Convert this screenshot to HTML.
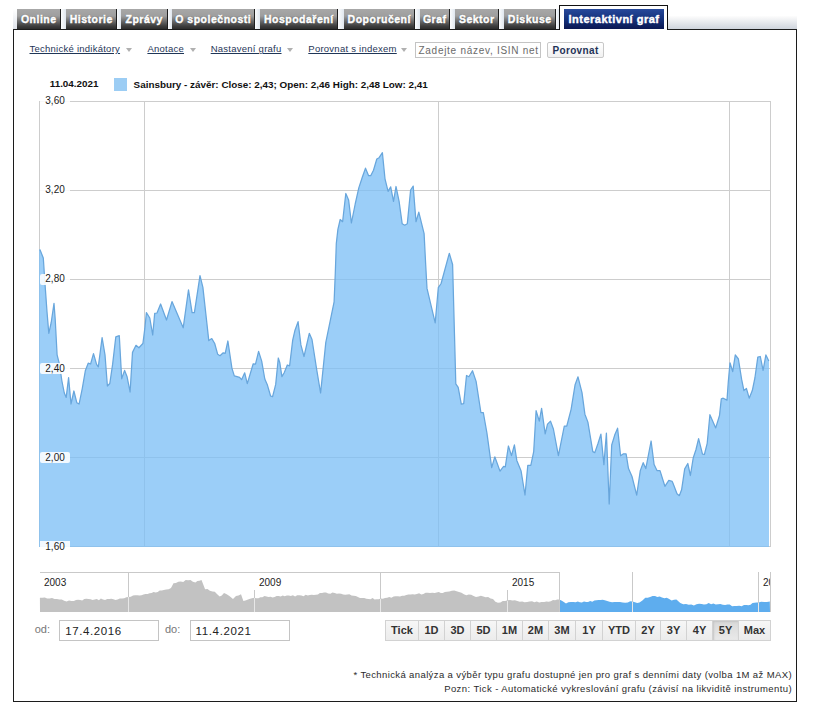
<!DOCTYPE html>
<html><head><meta charset="utf-8"><style>
*{margin:0;padding:0;box-sizing:border-box}
html,body{width:823px;height:711px;background:#fff;overflow:hidden;font-family:"Liberation Sans",sans-serif;}
.t{position:absolute;white-space:nowrap}
.tabbar{position:absolute;left:13px;top:16px;width:784px;height:13px;background:linear-gradient(#fdfdfd,#cfd4dc)}
.tab{position:absolute;top:9px;height:20px;background:linear-gradient(#a8a8a8 0%,#9e9e9e 35%,#6c6c6c 60%,#3e3e3e 85%,#2c2c2c 100%);border-right:1px solid #1e1e1e;color:#fff;font-weight:bold;font-size:10.5px;line-height:21px;text-align:center;letter-spacing:0.5px;text-indent:0.5px;text-shadow:0 0 1px #222;-webkit-text-stroke:0.45px #fff}
.gap{position:absolute;top:9px;height:20px;background:linear-gradient(90deg,#fbfcfd,#dfe6ee)}
.act{position:absolute;left:559px;top:5px;width:109px;height:25px;border:1px solid #111;border-bottom:none;background:#fff}
.actin{position:absolute;left:564px;top:9px;width:100px;height:20px;background:linear-gradient(#27499b 0%,#15327c 50%,#0a1752 100%);color:#fff;font-weight:bold;font-size:11px;line-height:21px;text-align:center;letter-spacing:0.5px;text-indent:0px;-webkit-text-stroke:0.4px #fff}
.box{position:absolute;left:13px;top:29px;width:784px;height:673px;border:1px solid #1c1c1c}
.lnk{color:#1f3657;text-decoration:underline;font-size:10px}
.arr{position:absolute;width:0;height:0;border-left:3px solid transparent;border-right:3px solid transparent;border-top:4px solid #b0b0b0}
.inp{position:absolute;border:1px solid #c4c4c4;background:#fff}
.btn{position:absolute;left:547px;top:42px;width:57px;height:16px;border:1px solid #c8c8c8;border-radius:2px;background:linear-gradient(#fff,#f1f1f1);color:#1f3358;font-weight:bold;font-size:10px;line-height:15px;letter-spacing:0.35px;text-align:center}
.rb{position:absolute;top:620px;height:21px;border:1px solid #d2d2d2;border-right:none;background:linear-gradient(#f6f6f6,#ececec);color:#333;font-weight:bold;font-size:11px;line-height:19px;text-align:center}
</style></head><body>
<div class="tabbar"></div>
<div class="gap" style="left:13px;width:4px;background:linear-gradient(#fff,#dfe3ea)"></div>
<div class="tab" style="left:17px;width:44px">Online</div><div class="gap" style="left:61px;width:5px"></div><div class="tab" style="left:66px;width:51px">Historie</div><div class="gap" style="left:117px;width:4px"></div><div class="tab" style="left:121px;width:47px">Zprávy</div><div class="gap" style="left:168px;width:4px"></div><div class="tab" style="left:172px;width:83px">O společnosti</div><div class="gap" style="left:255px;width:5px"></div><div class="tab" style="left:260px;width:78px">Hospodaření</div><div class="gap" style="left:338px;width:6px"></div><div class="tab" style="left:344px;width:71px">Doporučení</div><div class="gap" style="left:415px;width:5px"></div><div class="tab" style="left:420px;width:30px">Graf</div><div class="gap" style="left:450px;width:5px"></div><div class="tab" style="left:455px;width:44px">Sektor</div><div class="gap" style="left:499px;width:5px"></div><div class="tab" style="left:504px;width:52px">Diskuse</div><div class="gap" style="left:556px;width:3px"></div>
<div class="box"></div>
<div class="act"></div>
<div style="position:absolute;left:560px;top:29px;width:107px;height:2px;background:#fff"></div>
<div class="actin">Interaktivní graf</div>

<div class="t" style="left:29.5px;top:44.36px;font-size:9.5px;line-height:9.5px;color:#1f3657;text-decoration:underline;letter-spacing:0.25px">Technické indikátory</div>
<div class="arr" style="left:126px;top:48px"></div>
<div class="t" style="left:147.4px;top:44.36px;font-size:9.5px;line-height:9.5px;color:#1f3657;text-decoration:underline;letter-spacing:0.25px">Anotace</div>
<div class="arr" style="left:190px;top:48px"></div>
<div class="t" style="left:210.7px;top:44.36px;font-size:9.5px;line-height:9.5px;color:#1f3657;text-decoration:underline;letter-spacing:0.25px">Nastavení grafu</div>
<div class="arr" style="left:287px;top:48px"></div>
<div class="t" style="left:308.3px;top:44.36px;font-size:9.5px;line-height:9.5px;color:#1f3657;text-decoration:underline;letter-spacing:0.25px">Porovnat s indexem</div>
<div class="arr" style="left:401px;top:48px"></div>
<div class="inp" style="left:415px;top:42px;width:126px;height:16px;overflow:hidden"></div>
<div class="t" style="left:418.5px;top:46.03px;font-size:10px;line-height:10px;color:#6a6a6a;letter-spacing:0.72px">Zadejte název, ISIN net</div>
<div style="position:absolute;left:540px;top:42px;width:6px;height:16px;background:#fff"></div>
<div style="position:absolute;left:540px;top:42px;width:1px;height:16px;background:#c4c4c4"></div>
<div class="btn">Porovnat</div>

<div class="t" style="left:49.7px;top:78.92px;font-size:9.9px;line-height:9.9px;font-weight:bold;color:#111">11.04.2021</div>
<div style="position:absolute;left:114px;top:78px;width:13px;height:13px;background:#9ccdf4"></div>
<div class="t" style="left:133.6px;top:80.22px;font-size:9.9px;line-height:9.9px;font-weight:bold;color:#111">Sainsbury - závěr: Close: 2,43; Open: 2,46 High: 2,48 Low: 2,41</div>

<svg style="position:absolute;left:0;top:0" width="823" height="711">
<g stroke="#cdcdcd" stroke-width="1" fill="none" shape-rendering="crispEdges">
<line x1="40" y1="101.5" x2="770" y2="101.5"/>
<line x1="40" y1="190.5" x2="770" y2="190.5"/>
<line x1="40" y1="279.5" x2="770" y2="279.5"/>
<line x1="40" y1="368.5" x2="770" y2="368.5"/>
<line x1="40" y1="457.5" x2="770" y2="457.5"/>
<line x1="40" y1="546.5" x2="770" y2="546.5"/>
<line x1="144.5" y1="101" x2="144.5" y2="547"/>
<line x1="438.5" y1="101" x2="438.5" y2="547"/>
<line x1="729.5" y1="101" x2="729.5" y2="547"/>
<line x1="39.5" y1="101" x2="39.5" y2="547"/>
<line x1="770.5" y1="101" x2="770.5" y2="547"/>
</g>
<path d="M39,547 L39,249.6 L39.9,249.6 L43.3,258.0 L45.2,286.6 L47.0,311.8 L48.8,333.3 L51.2,322.5 L54.0,303.4 L55.2,319.0 L57.1,354.8 L59.5,364.4 L61.9,381.0 L64.3,393.0 L66.2,397.4 L68.6,377.6 L71.0,404.0 L73.9,391.0 L76.8,402.7 L79.1,404.0 L82.3,388.3 L85.4,370.4 L88.2,363.2 L90.6,364.0 L93.5,353.6 L96.6,364.4 L98.3,366.8 L102.1,337.6 L105.0,354.8 L107.4,386.0 L109.8,383.5 L112.6,364.4 L115.8,336.9 L119.3,335.7 L121.7,378.8 L124.6,370.4 L127.0,376.4 L130.1,392.0 L132.5,352.4 L136.0,345.3 L138.9,347.8 L142.9,343.5 L144.8,328.7 L146.4,312.6 L149.8,318.0 L152.7,335.0 L154.7,313.4 L157.0,313.0 L160.6,304.0 L166.5,320.0 L172.0,301.6 L183.2,327.8 L188.5,289.8 L192.1,312.6 L194.4,312.6 L200.0,275.6 L202.9,287.4 L208.8,340.6 L211.8,338.6 L214.7,343.5 L217.7,354.3 L220.0,355.7 L223.2,352.8 L225.2,353.3 L227.9,341.0 L231.9,368.1 L234.3,375.9 L237.0,376.6 L239.6,377.4 L241.6,379.7 L244.7,372.8 L247.3,383.6 L253.2,363.8 L255.5,364.2 L258.6,351.4 L261.7,361.1 L264.8,379.0 L267.2,384.4 L270.6,396.0 L272.6,396.7 L275.7,384.4 L278.3,358.0 L279.8,362.7 L281.9,376.6 L284.2,372.8 L287.3,365.0 L289.6,365.8 L292.7,340.2 L295.0,330.2 L298.1,321.7 L300.9,344.9 L304.0,356.5 L309.3,333.3 L312.0,339.5 L316.7,369.7 L320.6,393.0 L325.8,342.4 L334.1,301.8 L335.3,273.0 L336.3,243.5 L337.9,229.4 L340.2,219.5 L342.6,221.7 L345.8,193.5 L348.6,199.9 L351.4,223.0 L355.2,204.0 L358.8,187.9 L362.3,177.3 L365.5,168.2 L368.6,175.7 L370.7,175.7 L373.5,170.3 L376.8,159.0 L379.1,157.7 L382.4,152.7 L385.0,178.8 L388.1,191.4 L390.7,186.9 L393.5,201.3 L396.0,186.5 L399.1,201.3 L402.2,223.8 L404.7,225.2 L407.3,223.8 L410.6,190.0 L413.2,186.1 L416.0,221.7 L418.8,212.2 L424.1,233.6 L425.6,263.0 L427.0,288.4 L435.2,322.9 L438.3,287.7 L441.1,283.5 L449.3,253.3 L452.6,264.5 L454.5,335.0 L455.8,383.8 L458.2,387.4 L461.3,404.2 L463.7,403.7 L466.5,375.5 L468.9,376.7 L472.5,370.7 L476.1,381.4 L480.9,412.5 L483.3,412.5 L486.9,432.9 L491.7,467.6 L494.8,456.8 L500.0,471.1 L503.6,466.4 L505.3,466.8 L508.4,446.0 L511.5,455.6 L514.4,444.8 L516.8,460.4 L521.1,471.1 L525.0,495.0 L527.8,465.4 L530.8,465.4 L533.7,451.6 L536.1,410.7 L539.3,421.1 L541.6,408.3 L545.2,433.9 L547.5,424.1 L550.5,421.1 L553.4,429.0 L558.4,455.6 L564.3,426.0 L566.8,426.0 L571.1,409.3 L575.1,384.7 L578.0,376.8 L582.0,392.6 L584.9,414.2 L587.9,422.1 L592.8,451.6 L594.8,452.6 L597.9,443.7 L600.9,434.1 L603.9,464.6 L606.4,433.1 L609.2,504.0 L611.7,445.0 L614.7,435.1 L617.6,428.2 L620.6,455.8 L623.5,453.8 L626.1,453.8 L628.5,468.6 L632.0,476.5 L636.7,495.2 L640.3,470.6 L643.2,462.7 L645.8,468.6 L651.1,441.0 L654.1,464.6 L657.0,470.6 L660.0,470.6 L664.9,486.3 L668.8,480.4 L672.2,481.4 L673.1,483.6 L677.0,493.7 L679.3,495.7 L681.6,489.8 L684.7,468.9 L687.8,463.5 L690.4,475.5 L693.2,458.0 L696.0,449.5 L698.6,438.7 L702.5,454.2 L704.4,454.5 L707.2,443.3 L709.9,414.7 L715.7,427.9 L719.5,415.5 L721.3,398.9 L723.2,398.2 L727.0,400.1 L728.3,381.8 L730.0,362.8 L732.7,371.6 L735.3,354.9 L738.4,359.0 L741.6,379.2 L743.9,390.6 L746.4,388.4 L749.2,398.2 L752.3,390.6 L754.9,378.0 L757.8,357.1 L760.3,356.5 L763.1,370.4 L765.9,354.9 L768.8,360.9 L769,360.9 L769,547 Z" fill="#7abef6" fill-opacity="0.75" stroke="none"/>
<path d="M39.9,249.6 L43.3,258.0 L45.2,286.6 L47.0,311.8 L48.8,333.3 L51.2,322.5 L54.0,303.4 L55.2,319.0 L57.1,354.8 L59.5,364.4 L61.9,381.0 L64.3,393.0 L66.2,397.4 L68.6,377.6 L71.0,404.0 L73.9,391.0 L76.8,402.7 L79.1,404.0 L82.3,388.3 L85.4,370.4 L88.2,363.2 L90.6,364.0 L93.5,353.6 L96.6,364.4 L98.3,366.8 L102.1,337.6 L105.0,354.8 L107.4,386.0 L109.8,383.5 L112.6,364.4 L115.8,336.9 L119.3,335.7 L121.7,378.8 L124.6,370.4 L127.0,376.4 L130.1,392.0 L132.5,352.4 L136.0,345.3 L138.9,347.8 L142.9,343.5 L144.8,328.7 L146.4,312.6 L149.8,318.0 L152.7,335.0 L154.7,313.4 L157.0,313.0 L160.6,304.0 L166.5,320.0 L172.0,301.6 L183.2,327.8 L188.5,289.8 L192.1,312.6 L194.4,312.6 L200.0,275.6 L202.9,287.4 L208.8,340.6 L211.8,338.6 L214.7,343.5 L217.7,354.3 L220.0,355.7 L223.2,352.8 L225.2,353.3 L227.9,341.0 L231.9,368.1 L234.3,375.9 L237.0,376.6 L239.6,377.4 L241.6,379.7 L244.7,372.8 L247.3,383.6 L253.2,363.8 L255.5,364.2 L258.6,351.4 L261.7,361.1 L264.8,379.0 L267.2,384.4 L270.6,396.0 L272.6,396.7 L275.7,384.4 L278.3,358.0 L279.8,362.7 L281.9,376.6 L284.2,372.8 L287.3,365.0 L289.6,365.8 L292.7,340.2 L295.0,330.2 L298.1,321.7 L300.9,344.9 L304.0,356.5 L309.3,333.3 L312.0,339.5 L316.7,369.7 L320.6,393.0 L325.8,342.4 L334.1,301.8 L335.3,273.0 L336.3,243.5 L337.9,229.4 L340.2,219.5 L342.6,221.7 L345.8,193.5 L348.6,199.9 L351.4,223.0 L355.2,204.0 L358.8,187.9 L362.3,177.3 L365.5,168.2 L368.6,175.7 L370.7,175.7 L373.5,170.3 L376.8,159.0 L379.1,157.7 L382.4,152.7 L385.0,178.8 L388.1,191.4 L390.7,186.9 L393.5,201.3 L396.0,186.5 L399.1,201.3 L402.2,223.8 L404.7,225.2 L407.3,223.8 L410.6,190.0 L413.2,186.1 L416.0,221.7 L418.8,212.2 L424.1,233.6 L425.6,263.0 L427.0,288.4 L435.2,322.9 L438.3,287.7 L441.1,283.5 L449.3,253.3 L452.6,264.5 L454.5,335.0 L455.8,383.8 L458.2,387.4 L461.3,404.2 L463.7,403.7 L466.5,375.5 L468.9,376.7 L472.5,370.7 L476.1,381.4 L480.9,412.5 L483.3,412.5 L486.9,432.9 L491.7,467.6 L494.8,456.8 L500.0,471.1 L503.6,466.4 L505.3,466.8 L508.4,446.0 L511.5,455.6 L514.4,444.8 L516.8,460.4 L521.1,471.1 L525.0,495.0 L527.8,465.4 L530.8,465.4 L533.7,451.6 L536.1,410.7 L539.3,421.1 L541.6,408.3 L545.2,433.9 L547.5,424.1 L550.5,421.1 L553.4,429.0 L558.4,455.6 L564.3,426.0 L566.8,426.0 L571.1,409.3 L575.1,384.7 L578.0,376.8 L582.0,392.6 L584.9,414.2 L587.9,422.1 L592.8,451.6 L594.8,452.6 L597.9,443.7 L600.9,434.1 L603.9,464.6 L606.4,433.1 L609.2,504.0 L611.7,445.0 L614.7,435.1 L617.6,428.2 L620.6,455.8 L623.5,453.8 L626.1,453.8 L628.5,468.6 L632.0,476.5 L636.7,495.2 L640.3,470.6 L643.2,462.7 L645.8,468.6 L651.1,441.0 L654.1,464.6 L657.0,470.6 L660.0,470.6 L664.9,486.3 L668.8,480.4 L672.2,481.4 L673.1,483.6 L677.0,493.7 L679.3,495.7 L681.6,489.8 L684.7,468.9 L687.8,463.5 L690.4,475.5 L693.2,458.0 L696.0,449.5 L698.6,438.7 L702.5,454.2 L704.4,454.5 L707.2,443.3 L709.9,414.7 L715.7,427.9 L719.5,415.5 L721.3,398.9 L723.2,398.2 L727.0,400.1 L728.3,381.8 L730.0,362.8 L732.7,371.6 L735.3,354.9 L738.4,359.0 L741.6,379.2 L743.9,390.6 L746.4,388.4 L749.2,398.2 L752.3,390.6 L754.9,378.0 L757.8,357.1 L760.3,356.5 L763.1,370.4 L765.9,354.9 L768.8,360.9" fill="none" stroke="#68a6dc" stroke-width="1.25" stroke-linejoin="round"/>
<g font-family="Liberation Sans" font-size="10" fill="#1a1a1a">
<rect x="40" y="96" width="30" height="11" rx="2" fill="#fff" fill-opacity="0.88"/><text x="45.3" y="104">3,60</text>
<rect x="40" y="185" width="30" height="11" rx="2" fill="#fff" fill-opacity="0.88"/><text x="45.3" y="193">3,20</text>
<rect x="40" y="274" width="30" height="11" rx="2" fill="#fff" fill-opacity="0.88"/><text x="45.3" y="282">2,80</text>
<rect x="40" y="363" width="30" height="11" rx="2" fill="#fff" fill-opacity="0.88"/><text x="45.3" y="372">2,40</text>
<rect x="40" y="452" width="30" height="11" rx="2" fill="#fff" fill-opacity="0.88"/><text x="45.3" y="461">2,00</text>
<rect x="40" y="541" width="30" height="7" fill="#fff" fill-opacity="0.88"/><text x="45.3" y="550">1,60</text>
</g>
<path d="M40,612 L39.9,597.8 L42.3,597.7 L44.8,597.5 L47.2,598.6 L49.6,598.5 L52.0,598.0 L54.5,599.1 L56.9,599.0 L59.3,599.5 L61.7,599.4 L64.2,600.8 L66.6,601.5 L69.0,600.5 L71.5,601.0 L73.9,601.0 L76.0,599.9 L78.1,599.7 L80.2,600.0 L82.2,600.4 L84.3,598.9 L86.4,598.8 L88.5,599.0 L90.6,599.3 L92.6,599.9 L94.7,599.4 L96.8,599.1 L98.9,600.2 L100.9,598.6 L103.0,599.5 L105.1,600.1 L107.2,599.1 L109.3,598.9 L111.3,598.8 L113.4,599.2 L115.5,600.1 L117.6,599.5 L119.8,598.4 L122.0,598.6 L124.2,598.3 L126.4,597.3 L128.6,597.0 L130.8,596.8 L133.0,595.6 L135.1,595.2 L137.3,595.2 L139.5,595.4 L141.5,595.3 L143.5,594.5 L145.6,593.9 L147.6,594.0 L149.6,593.3 L151.6,593.0 L153.6,592.1 L155.7,592.5 L157.7,591.9 L159.7,590.5 L161.8,590.6 L163.8,590.0 L166.2,589.4 L168.6,589.3 L171.0,588.0 L173.5,583.2 L175.9,583.0 L178.4,581.7 L180.8,581.5 L183.2,582.0 L185.7,580.1 L188.1,580.2 L190.5,580.0 L192.9,581.7 L195.4,582.5 L197.4,581.0 L199.5,580.8 L201.5,580.0 L205.1,589.3 L207.5,589.1 L209.9,590.8 L212.4,591.6 L214.8,591.7 L217.2,594.3 L219.7,596.6 L221.8,595.5 L224.0,593.0 L226.7,594.2 L229.4,596.0 L233.0,599.0 L236.0,596.0 L238.5,595.5 L241.0,594.2 L243.4,601.0 L245.4,600.5 L247.4,599.8 L249.4,599.0 L251.9,598.3 L254.3,597.8 L256.3,598.2 L258.4,598.2 L260.4,597.2 L262.4,597.3 L264.5,596.0 L266.5,596.6 L268.5,596.9 L270.6,596.8 L272.6,597.4 L274.6,597.0 L276.6,596.0 L278.6,596.1 L280.7,596.6 L282.7,595.4 L284.7,596.2 L286.8,595.6 L288.8,595.5 L290.8,596.1 L292.9,595.2 L295.1,596.4 L297.2,595.2 L299.3,595.3 L301.4,595.5 L303.6,596.2 L305.7,594.7 L307.8,595.4 L309.8,595.0 L311.8,594.8 L313.9,595.1 L315.9,594.7 L317.9,594.4 L319.9,593.1 L322.0,593.0 L324.0,592.6 L326.0,592.5 L328.2,593.4 L330.4,593.8 L332.5,592.6 L334.7,592.9 L336.9,593.7 L339.0,593.5 L341.1,593.7 L343.2,594.4 L345.2,594.8 L347.3,594.5 L349.4,594.3 L351.5,595.4 L353.6,595.7 L355.8,596.1 L357.9,596.9 L360.0,598.0 L362.1,598.0 L364.2,598.1 L366.4,598.8 L368.5,599.0 L370.5,599.2 L372.6,598.0 L374.6,599.5 L376.6,599.2 L378.7,599.3 L380.7,598.5 L382.8,598.8 L385.0,597.9 L387.1,597.7 L389.3,596.9 L391.4,597.7 L393.6,596.4 L395.7,596.2 L397.9,596.3 L400.0,596.6 L402.1,595.7 L404.2,595.7 L406.3,594.9 L408.4,594.6 L410.5,594.5 L412.6,594.2 L414.7,594.6 L416.9,594.1 L419.1,593.3 L421.3,594.6 L423.4,593.9 L425.6,592.8 L427.8,592.8 L430.0,593.0 L432.4,592.7 L434.7,593.0 L436.7,592.5 L438.8,591.9 L440.8,593.0 L442.8,593.0 L444.9,591.9 L446.9,591.7 L449.3,591.5 L451.8,590.7 L454.2,590.6 L456.6,591.2 L459.0,591.9 L461.5,592.8 L463.9,594.2 L466.3,595.3 L468.8,594.5 L471.2,594.8 L473.6,596.1 L476.0,597.0 L478.5,596.4 L480.9,595.8 L483.3,596.6 L485.7,597.3 L488.1,596.9 L490.6,598.5 L493.0,599.0 L495.4,601.7 L497.9,602.7 L500.4,602.5 L502.8,601.0 L505.2,601.0 L507.6,600.2 L510.0,600.0 L512.5,600.4 L514.9,600.2 L517.3,601.0 L519.8,601.7 L522.2,601.6 L524.6,602.3 L527.1,602.0 L529.5,601.6 L532.0,601.3 L534.4,602.2 L536.8,601.5 L539.2,602.4 L541.6,602.1 L544.1,602.1 L546.5,601.5 L548.6,601.7 L550.8,601.3 L553.0,600.0 L555.1,600.2 L557.2,599.6 L559.4,599.5 L559.5,599.5 L559.5,612 Z" fill="#c2c2c2"/>
<path d="M559.5,612 L559.5,599.5 L559.4,599.5 L562.3,601.0 L566.0,603.4 L568.4,602.3 L570.9,602.0 L573.3,602.1 L575.7,602.2 L577.8,601.6 L579.8,602.2 L581.9,602.5 L584.0,601.4 L586.1,602.1 L588.1,602.0 L590.2,601.0 L592.3,601.7 L594.4,600.5 L596.5,600.2 L598.5,600.1 L600.6,599.9 L602.7,599.8 L604.8,600.2 L607.2,600.9 L609.6,601.8 L612.1,602.2 L614.5,602.0 L617.2,602.0 L620.0,602.0 L622.6,602.4 L625.2,602.8 L627.8,602.4 L630.2,601.3 L632.6,601.6 L634.9,602.2 L637.2,602.9 L639.5,602.4 L642.4,600.6 L645.3,597.7 L647.7,597.8 L650.1,596.9 L652.6,595.9 L655.0,596.1 L657.3,596.9 L659.7,596.4 L662.0,597.6 L664.4,598.2 L666.7,597.7 L669.2,598.9 L671.6,600.4 L674.0,599.8 L676.4,599.6 L680.3,603.0 L683.2,604.3 L686.1,603.9 L688.7,604.8 L691.3,604.4 L693.9,605.5 L696.5,604.3 L699.1,603.8 L701.7,603.9 L704.0,604.5 L706.4,604.3 L708.7,603.0 L711.1,604.2 L713.4,603.5 L715.7,604.6 L718.1,604.3 L720.4,604.1 L722.8,604.7 L725.1,604.9 L727.4,604.4 L729.7,604.4 L732.1,606.3 L734.4,606.0 L736.7,605.9 L739.2,605.7 L741.6,606.2 L744.0,605.0 L746.5,604.9 L748.5,605.2 L750.5,604.7 L752.5,603.1 L754.5,602.8 L756.5,602.4 L758.5,602.4 L761.2,601.7 L764.0,602.0 L766.9,602.0 L769.8,601.6 L770,612 Z" fill="#5eadee"/>
<g stroke="#c9c9c9" stroke-width="1" fill="none" shape-rendering="crispEdges">
<line x1="40" y1="572.5" x2="559" y2="572.5"/>
<line x1="559.5" y1="572" x2="559.5" y2="612"/>
<line x1="770.5" y1="572" x2="770.5" y2="612"/>
<line x1="128.5" y1="572" x2="128.5" y2="612"/>
<line x1="254.5" y1="590" x2="254.5" y2="612"/>
<line x1="380.5" y1="572" x2="380.5" y2="612"/>
<line x1="507.5" y1="590" x2="507.5" y2="612"/>
<line x1="632.5" y1="572" x2="632.5" y2="612"/>
<line x1="758.5" y1="572" x2="758.5" y2="612"/>
</g>
<g stroke="#fff" stroke-opacity="0.55" stroke-width="1" shape-rendering="crispEdges">
<line x1="128.5" y1="597" x2="128.5" y2="612"/>
<line x1="254.5" y1="598" x2="254.5" y2="612"/>
<line x1="380.5" y1="599" x2="380.5" y2="612"/>
<line x1="507.5" y1="601" x2="507.5" y2="612"/>
<line x1="632.5" y1="602" x2="632.5" y2="612"/>
<line x1="758.5" y1="603" x2="758.5" y2="612"/>
</g>
<g font-family="Liberation Sans" font-size="10" fill="#222">
<text x="44" y="586">2003</text>
<text x="259" y="586">2009</text>
<text x="512" y="586">2015</text>
</g>
<svg x="0" y="0" width="770" height="711"><text x="763" y="586" font-family="Liberation Sans" font-size="10" fill="#222">2021</text></svg>
</svg>

<div class="t" style="left:34.7px;top:624.29px;font-size:11px;line-height:11px;color:#777">od:</div>
<div class="inp" style="left:59px;top:620px;width:100px;height:21px"></div>
<div class="t" style="left:65.3px;top:625.97px;font-size:11.5px;line-height:11.5px;color:#222;letter-spacing:0.6px">17.4.2016</div>
<div class="t" style="left:165px;top:624.29px;font-size:11px;line-height:11px;color:#777">do:</div>
<div class="inp" style="left:190px;top:620px;width:100px;height:21px"></div>
<div class="t" style="left:195.5px;top:625.97px;font-size:11.5px;line-height:11.5px;color:#222;letter-spacing:0.65px">11.4.2021</div>
<div class="rb" style="left:385px;width:33px;">Tick</div><div class="rb" style="left:418px;width:26px;">1D</div><div class="rb" style="left:444px;width:26px;">3D</div><div class="rb" style="left:470px;width:26px;">5D</div><div class="rb" style="left:496px;width:26px;">1M</div><div class="rb" style="left:522px;width:26px;">2M</div><div class="rb" style="left:548px;width:27px;">3M</div><div class="rb" style="left:575px;width:27px;">1Y</div><div class="rb" style="left:602px;width:33px;">YTD</div><div class="rb" style="left:635px;width:25px;">2Y</div><div class="rb" style="left:660px;width:26px;">3Y</div><div class="rb" style="left:686px;width:26px;">4Y</div><div class="rb" style="left:712px;width:26px;background:linear-gradient(#d9d9d9,#e9e9e9);box-shadow:inset 1px 1px 2px #c4c4c4;">5Y</div><div class="rb" style="left:738px;width:33px;border-right:1px solid #d2d2d2;">Max</div>
<div class="t" style="left:0;width:792px;top:669.96px;font-size:9.5px;line-height:9.5px;letter-spacing:0.385px;text-align:right;color:#2a2a2a">* Technická analýza a výběr typu grafu dostupné jen pro graf s denními daty (volba 1M až MAX)</div>
<div class="t" style="left:0;width:792px;top:683.96px;font-size:9.5px;line-height:9.5px;letter-spacing:0.41px;text-align:right;color:#2a2a2a">Pozn: Tick - Automatické vykreslování grafu (závisí na likviditě instrumentu)</div>
</body></html>
